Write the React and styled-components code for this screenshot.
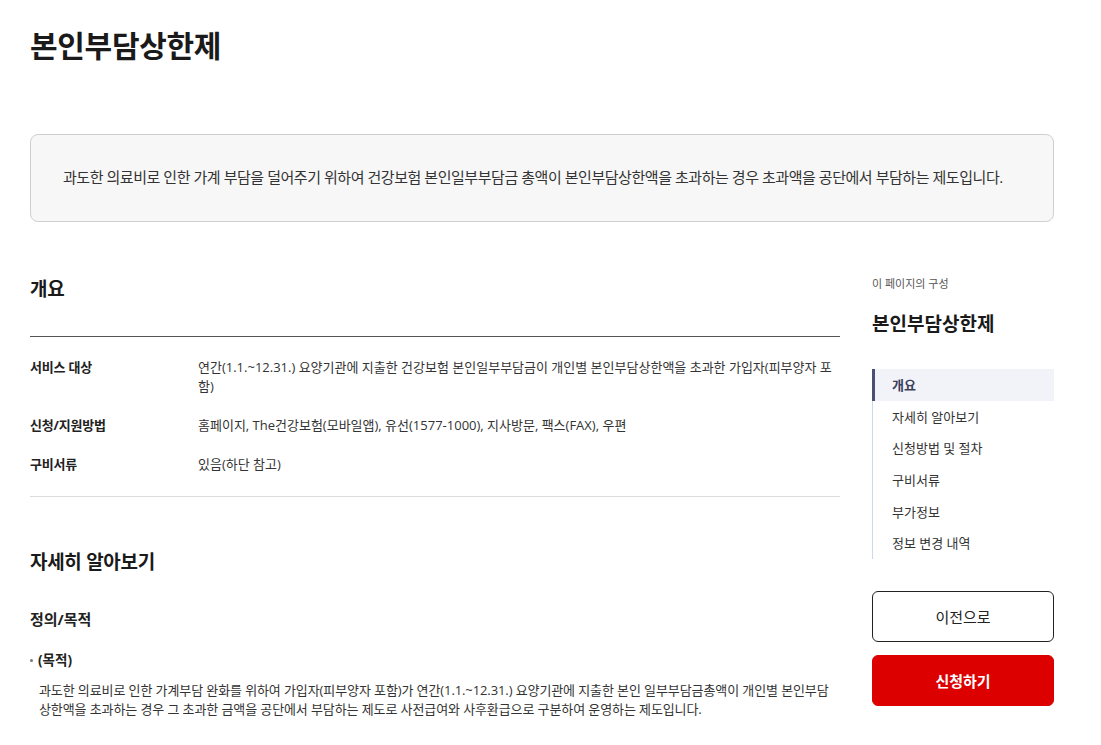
import styled, { createGlobalStyle } from "styled-components";

const GlobalStyle = createGlobalStyle`
  body {
    margin: 0;
    background: #fff;
    color: #222;
    font-family: "Open Sans", "Noto Sans CJK KR", sans-serif;
  }
  * { box-sizing: border-box; }
`;

const Page = styled.div`
  width: 1024px;
  margin-left: 30px;
  padding-top: 24px;
`;

const Title = styled.h1`
  margin: 0;
  font-size: 30px;
  font-weight: 700;
  letter-spacing: -0.3px;
  line-height: 44px;
  color: #1a1a1a;
`;

const Summary = styled.div`
  margin-top: 66px;
  height: 88px;
  display: flex;
  align-items: center;
  padding: 0 32px 3px;
  border: 1px solid #cfcfcf;
  border-radius: 8px;
  background: #f7f7f7;
  font-size: 15px;
  color: #333;
  letter-spacing: -0.45px;
`;

const Layout = styled.div`
  display: grid;
  grid-template-columns: 810px 182px;
  column-gap: 32px;
  margin-top: 50px;
`;

const Main = styled.main``;

const SectionTitle = styled.h2`
  margin: 0;
  font-size: 19px;
  font-weight: 700;
  letter-spacing: -0.3px;
  line-height: 34px;
  color: #1a1a1a;
  padding-top: ${(p) => p.$top || 0}px;
`;

const InfoTable = styled.div`
  margin-top: 30px;
  border-top: 1px solid #555;
  border-bottom: 1px solid #dcdcdc;
  padding: 21px 0 22px;
`;

const InfoRow = styled.div`
  display: grid;
  grid-template-columns: 168px 1fr;
  font-size: 13px;
  line-height: 19px;
  & + & {
    margin-top: 20px;
  }
`;

const Label = styled.div`
  font-weight: 700;
  color: #222;
  letter-spacing: -0.2px;
`;

const Value = styled.div`
  color: #333;
  padding-right: 4px;
`;

const SubTitle = styled.h3`
  margin: 28px 0 0;
  font-size: 15px;
  font-weight: 700;
  line-height: 24px;
  color: #222;
`;

const BulletHead = styled.div`
  margin-top: 18px;
  display: flex;
  align-items: center;
  gap: 5px;
  font-size: 13.5px;
  font-weight: 700;
  line-height: 22px;
  &::before {
    content: "";
    width: 3px;
    height: 3px;
    background: #777;
    border-radius: 50%;
  }
`;

const Paragraph = styled.p`
  margin: 10px 0 0 9px;
  font-size: 13px;
  line-height: 19px;
  letter-spacing: -0.1px;
  color: #333;
`;

const Aside = styled.aside`
  padding-top: 4px;
`;

const AsideCaption = styled.div`
  font-size: 11px;
  color: #555;
  line-height: 16px;
`;

const AsideTitle = styled.div`
  margin-top: 18px;
  font-size: 19px;
  font-weight: 700;
  line-height: 28px;
  color: #1a1a1a;
`;

const Nav = styled.ul`
  list-style: none;
  margin: 31px 0 0;
  padding: 0;
  border-left: 1px solid #cfd6e6;
`;

const NavItem = styled.li`
  height: 31.6px;
  display: flex;
  align-items: center;
  padding-left: 20px;
  font-size: 13px;
  color: ${(p) => (p.$active ? "#3b3f5c" : "#333")};
  font-weight: ${(p) => (p.$active ? 700 : 400)};
  background: ${(p) => (p.$active ? "#f2f3f8" : "transparent")};
  box-shadow: ${(p) => (p.$active ? "inset 3px 0 0 #4b4f75" : "none")};
  margin-left: -1px;
`;

const Buttons = styled.div`
  margin-top: 32px;
  display: flex;
  flex-direction: column;
  gap: 13px;
`;

const Button = styled.button`
  height: 51px;
  width: 100%;
  border-radius: 6px;
  font-family: inherit;
  font-size: 15px;
  border: 1px solid ${(p) => (p.$primary ? "#dd0000" : "#222")};
  background: ${(p) => (p.$primary ? "#dd0000" : "#fff")};
  color: ${(p) => (p.$primary ? "#fff" : "#222")};
  font-weight: ${(p) => (p.$primary ? 700 : 400)};
  cursor: pointer;
`;

const navItems = ["개요", "자세히 알아보기", "신청방법 및 절차", "구비서류", "부가정보", "정보 변경 내역"];

const rows = [
  {
    label: "서비스 대상",
    value:
      "연간(1.1.~12.31.) 요양기관에 지출한 건강보험 본인일부부담금이 개인별 본인부담상한액을 초과한 가입자(피부양자 포함)",
  },
  {
    label: "신청/지원방법",
    value: "홈페이지, The건강보험(모바일앱), 유선(1577-1000), 지사방문, 팩스(FAX), 우편",
  },
  { label: "구비서류", value: "있음(하단 참고)" },
];

export default function App() {
  return (
    <>
      <GlobalStyle />
      <Page>
        <Title>본인부담상한제</Title>
        <Summary>
          과도한 의료비로 인한 가계 부담을 덜어주기 위하여 건강보험 본인일부부담금 총액이 본인부담상한액을 초과하는 경우 초과액을 공단에서 부담하는 제도입니다.
        </Summary>
        <Layout>
          <Main>
            <SectionTitle>개요</SectionTitle>
            <InfoTable>
              {rows.map((r) => (
                <InfoRow key={r.label}>
                  <Label>{r.label}</Label>
                  <Value>{r.value}</Value>
                </InfoRow>
              ))}
            </InfoTable>
            <SectionTitle $top={48}>자세히 알아보기</SectionTitle>
            <SubTitle>정의/목적</SubTitle>
            <BulletHead>(목적)</BulletHead>
            <Paragraph>
              과도한 의료비로 인한 가계부담 완화를 위하여 가입자(피부양자 포함)가 연간(1.1.~12.31.) 요양기관에 지출한 본인 일부부담금총액이 개인별 본인부담상한액을 초과하는 경우 그 초과한 금액을 공단에서 부담하는 제도로 사전급여와 사후환급으로 구분하여 운영하는 제도입니다.
            </Paragraph>
          </Main>
          <Aside>
            <AsideCaption>이 페이지의 구성</AsideCaption>
            <AsideTitle>본인부담상한제</AsideTitle>
            <Nav>
              {navItems.map((n, i) => (
                <NavItem key={n} $active={i === 0}>
                  {n}
                </NavItem>
              ))}
            </Nav>
            <Buttons>
              <Button>이전으로</Button>
              <Button $primary>신청하기</Button>
            </Buttons>
          </Aside>
        </Layout>
      </Page>
    </>
  );
}
